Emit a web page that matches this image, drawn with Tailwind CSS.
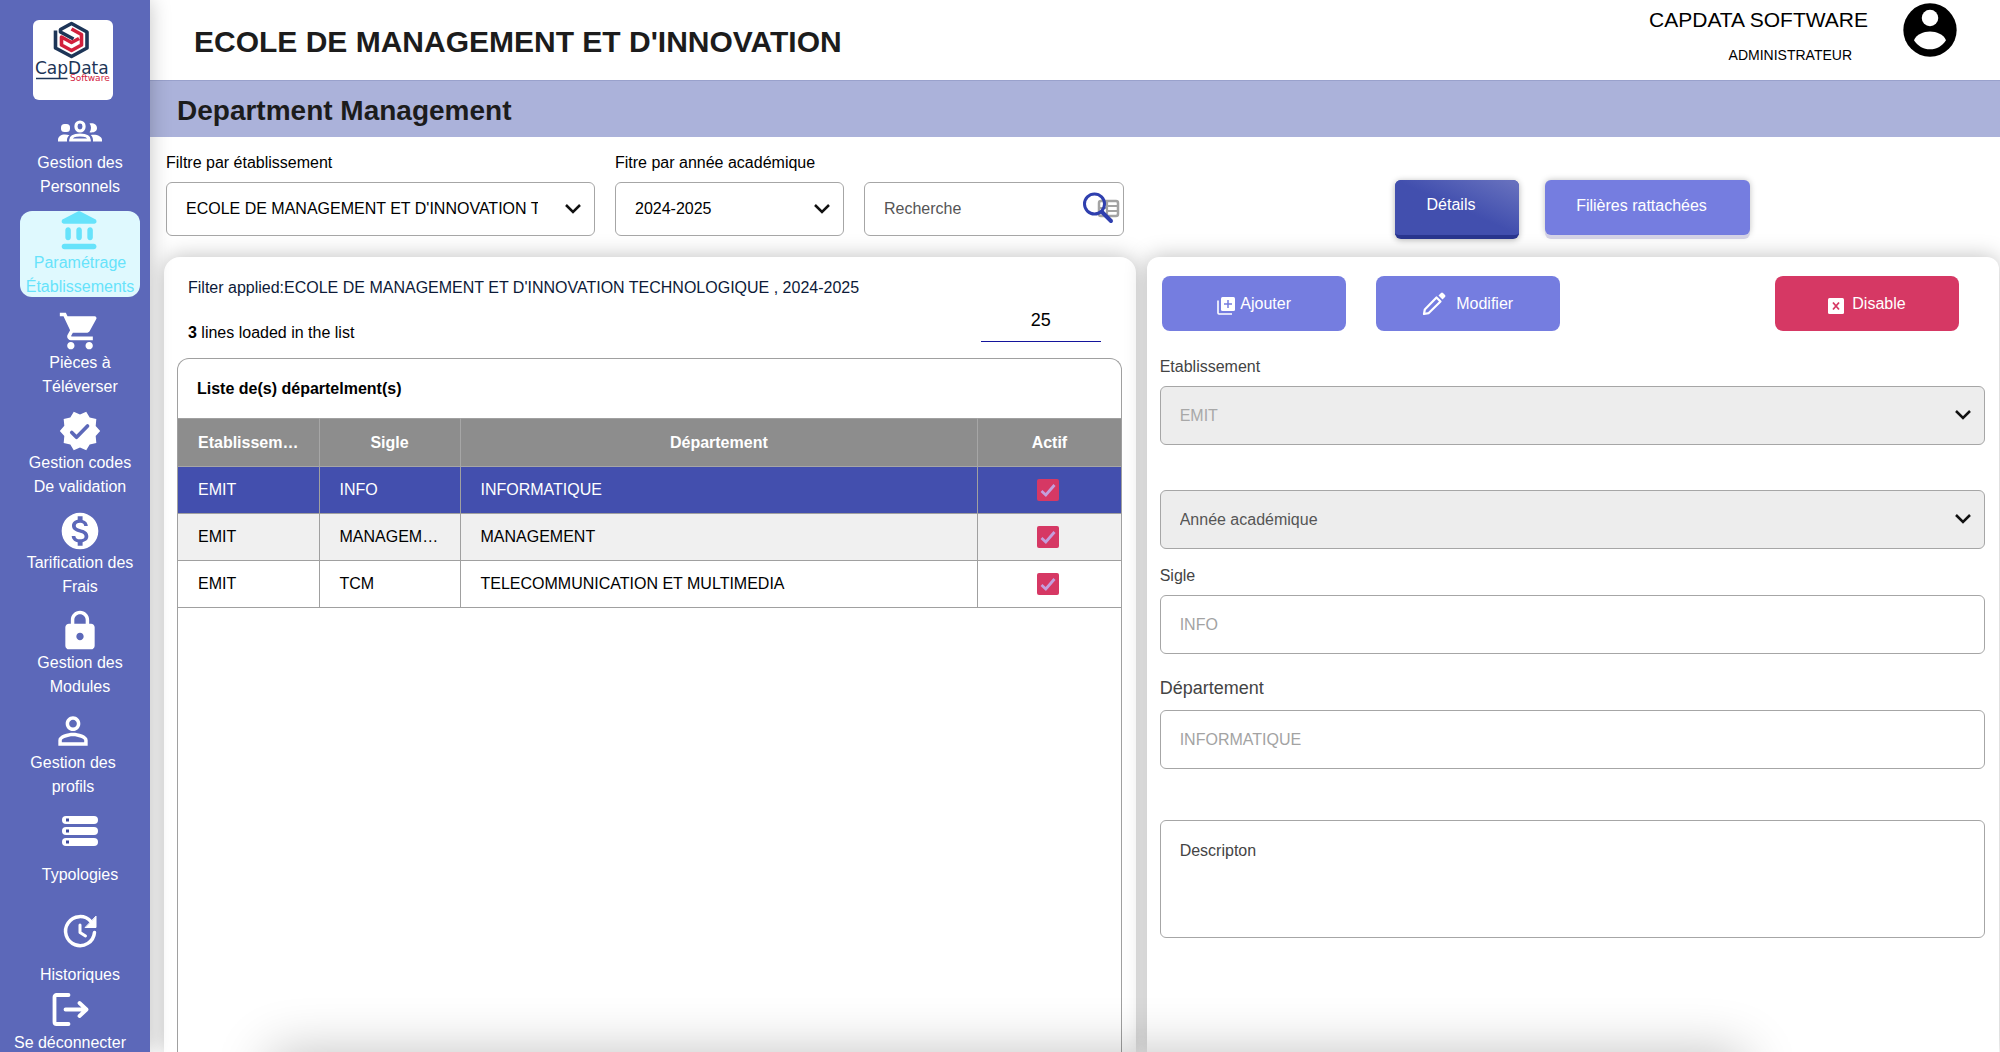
<!DOCTYPE html>
<html lang="fr">
<head>
<meta charset="utf-8">
<meta name="viewport" content="width=device-width, initial-scale=1">
<title>Department Management</title>
<script src="https://cdn.jsdelivr.net/npm/@tailwindcss/browser@4"></script>
</head>
<body class="flex h-screen overflow-hidden bg-white font-['Liberation_Sans',Arial,sans-serif] text-base leading-6 text-black">

<!-- Sidebar -->
<aside class="relative z-10 flex w-[150px] shrink-0 flex-col overflow-clip bg-[#5c68b9] pt-5 text-center text-white shadow-[0_0_20px_rgba(0,0,0,0.24)]">
  <a href="#" aria-label="CapData Software" class="ml-[33px] block size-20 shrink-0 rounded-md bg-white">
    <svg viewBox="0 0 80 80" class="size-20">
      <g fill="none" stroke-width="3.600" stroke-linejoin="round" stroke-linecap="butt">
        <path d="M22.500 10.500V28L38.500 36.500L54 28V12L38.500 3.500L27.500 9.500V12L40.500 19" stroke="#1d3557"/>
        <path d="M38.500 9L48.500 14.500V25L38.500 30.500L28.500 25V17L38.500 22.500L46 18.500" stroke="#d2203c"/>
      </g>
      <text x="2" y="54" font-family="DejaVu Sans, sans-serif" font-size="17" fill="#1d3557">CapData</text>
      <path d="M3 58.500H34.500" stroke="#1d3557" stroke-width="1.500"/>
      <text x="37" y="61" font-family="DejaVu Sans, sans-serif" font-size="9" fill="#d2203c">Software</text>
    </svg>
  </a>
  <nav class="mt-[11px] flex flex-col">
    <div class="flex flex-col gap-3.5 pl-5">
      <a href="#" class="block h-[86px] w-[120px]">
        <span class="flex h-10 items-center justify-center">
          <svg viewBox="0 0 44 44" class="size-11 shrink-0" fill="#fff">
            <rect x="3" y="15" width="9" height="8" rx="3.500"/><path d="M0 32.500V31c0-3.500 3-5.500 7-5.500 1.500 0 3 .2 4.500.8-1.800 1.400-2.500 3-2.500 4.700v1.500z"/>
            <path d="M31.500 14.500c4-.8 7.500 1 7.500 4.500s-3.500 5-7.500 4.200c2-2.500 2-6.200 0-8.700z"/><path d="M35 32.500V31c0-2-.8-3.700-2.300-5.100C38.500 25 44 27 44 31v1.500z"/>
            <rect x="18" y="13" width="8" height="9" rx="4" fill="none" stroke="#fff" stroke-width="3.200"/>
            <path d="M12.800 31c0-3.500 4.200-5 9.200-5s9.200 1.500 9.200 5z" fill="none" stroke="#fff" stroke-width="3.200"/>
          </svg>
        </span>Gestion des<br>Personnels</a>
      <a href="#" aria-current="page" class="block h-[86px] w-[120px] rounded-xl bg-[#dff9fe] text-[#67e3fb]">
        <span class="flex h-10 items-center justify-center">
          <svg viewBox="0 0 24 24" class="size-11 shrink-0" fill="currentColor"><path d="M4 11.500v4c0 .83.67 1.500 1.500 1.500S7 16.330 7 15.500v-4c0-.83-.67-1.500-1.500-1.500S4 10.670 4 11.500zm6 0v4c0 .83.67 1.500 1.500 1.500s1.500-.67 1.500-1.500v-4c0-.83-.67-1.500-1.500-1.500s-1.500.67-1.500 1.500zM3.500 22h16c.83 0 1.500-.67 1.500-1.500s-.67-1.500-1.500-1.500h-16c-.83 0-1.500.67-1.500 1.500S2.670 22 3.500 22zM16 11.500v4c0 .83.67 1.500 1.500 1.500s1.500-.67 1.500-1.500v-4c0-.83-.67-1.500-1.500-1.500s-1.500.67-1.500 1.500zM10.570 1.490l-7.900 4.160c-.41.21-.67.64-.67 1.100C2 7.440 2.560 8 3.250 8h16.510C20.440 8 21 7.440 21 6.750c0-.46-.26-.89-.67-1.100l-7.900-4.160c-.58-.31-1.280-.31-1.860 0z"/></svg>
        </span>Paramétrage<br>Établissements</a>
      <a href="#" class="block h-[86px] w-[120px]">
        <span class="flex h-10 items-center justify-center">
          <svg viewBox="0 0 24 24" class="size-11 shrink-0" fill="currentColor"><path d="M7 18c-1.100 0-1.990.9-1.990 2S5.900 22 7 22s2-.9 2-2-.9-2-2-2zM1 2v2h2l3.600 7.590-1.350 2.450c-.16.28-.25.61-.25.96 0 1.100.9 2 2 2h12v-2H7.420c-.14 0-.25-.11-.25-.25l.03-.12.900-1.630h7.450c.75 0 1.410-.41 1.750-1.030l3.580-6.490A1.003 1.003 0 0 0 20 4H5.210l-.94-2H1zm16 16c-1.100 0-1.990.9-1.990 2s.89 2 1.990 2 2-.9 2-2-.9-2-2-2z"/></svg>
        </span>Pièces à<br>Téléverser</a>
      <a href="#" class="block h-[86px] w-[120px]">
        <span class="flex h-10 items-center justify-center">
          <svg viewBox="0 0 24 24" class="size-11 shrink-0"><path fill="#fff" d="M23 12l-2.440-2.790.34-3.690-3.610-.82L15.400 1.500 12 2.960 8.600 1.500 6.710 4.690 3.100 5.500l.34 3.700L1 12l2.440 2.790-.34 3.700 3.610.82L8.600 22.500l3.400-1.470 3.400 1.460 1.890-3.190 3.610-.82-.34-3.690z"/><path d="M7.500 12.800l2.600 2.600 6-6.100" fill="none" stroke="#5c68b9" stroke-width="2" stroke-linecap="round" stroke-linejoin="round"/></svg>
        </span>Gestion codes<br>De validation</a>
      <a href="#" class="block h-[86px] w-[120px]">
        <span class="flex h-10 items-center justify-center">
          <svg viewBox="0 0 24 24" class="size-11 shrink-0" fill="currentColor"><path d="M12 2C6.480 2 2 6.480 2 12s4.480 10 10 10 10-4.480 10-10S17.520 2 12 2zm1.410 16.090V20h-2.670v-1.930c-1.710-.36-3.160-1.460-3.270-3.400h1.960c.1 1.050.82 1.870 2.650 1.870 1.960 0 2.400-.98 2.400-1.590 0-.83-.44-1.610-2.670-2.140-2.480-.6-4.180-1.620-4.180-3.670 0-1.720 1.390-2.840 3.110-3.210V4h2.670v1.950c1.860.45 2.790 1.860 2.850 3.390H14.300c-.05-1.110-.64-1.870-2.220-1.870-1.500 0-2.400.68-2.400 1.640 0 .84.65 1.390 2.670 1.910s4.180 1.390 4.180 3.910c-.01 1.830-1.380 2.830-3.120 3.160z"/></svg>
        </span>Tarification des<br>Frais</a>
      <a href="#" class="block h-[86px] w-[120px]">
        <span class="flex h-10 items-center justify-center">
          <svg viewBox="0 0 24 24" class="size-11 shrink-0" fill="currentColor"><path d="M18 8h-1V6c0-2.760-2.240-5-5-5S7 3.240 7 6v2H6c-1.100 0-2 .9-2 2v10c0 1.100.9 2 2 2h12c1.100 0 2-.9 2-2V10c0-1.100-.9-2-2-2zm-6 9c-1.100 0-2-.9-2-2s.9-2 2-2 2 .9 2 2-.9 2-2 2zm3.100-9H8.900V6c0-1.710 1.390-3.100 3.100-3.100 1.710 0 3.100 1.390 3.100 3.100v2z"/></svg>
        </span>Gestion des<br>Modules</a>
      <a href="#" class="block h-[86px] w-[106px]">
        <span class="flex h-10 items-center justify-center">
          <svg viewBox="0 0 24 24" class="size-11 shrink-0" fill="currentColor"><path d="M12 5.900c1.160 0 2.100.94 2.100 2.100s-.94 2.100-2.100 2.100S9.900 9.160 9.900 8s.94-2.100 2.100-2.100m0 9c2.970 0 6.100 1.460 6.100 2.100v1.100H5.900V17c0-.64 3.130-2.100 6.100-2.100M12 4C9.790 4 8 5.790 8 8s1.790 4 4 4 4-1.790 4-4-1.790-4-4-4zm0 9c-2.670 0-8 1.340-8 4v3h16v-3c0-2.660-5.330-4-8-4z"/></svg>
        </span>Gestion des<br>profils</a>
      <a href="#" class="flex h-[86px] w-[120px] flex-col justify-between">
        <span class="flex h-10 items-center justify-center">
          <svg viewBox="0 0 44 44" class="size-11 shrink-0"><g fill="#fff"><rect x="4" y="7" width="36" height="8" rx="4"/><rect x="4" y="18" width="36" height="8" rx="4"/><rect x="4" y="29" width="36" height="8" rx="4"/></g><path d="M8 9.500h3v3H8zM8 20.500h3v3H8zM8 31.500h3v3H8z" fill="#3e4b9e"/></svg>
        </span><span class="pb-2.5">Typologies</span></a>
      <a href="#" class="flex h-[86px] w-[120px] flex-col justify-between">
        <span class="flex h-10 items-center justify-center">
          <svg viewBox="0 0 44 44" class="size-11 shrink-0" fill="none" stroke="#fff" stroke-width="3.500" stroke-linecap="round" stroke-linejoin="round"><path d="M36.500 23.500A14.500 14.500 0 1 1 33 12.600"/><path d="M22 16v7.500l5.500 3.500" stroke-width="3"/><path d="M38 7.500v11H27.500z" fill="#fff" stroke-width="1"/></svg>
        </span><span class="pb-2.5">Historiques</span></a>
    </div>
    <a href="#" class="-mt-1.5 block w-[140px]">
      <span class="flex h-10 items-center justify-center">
        <svg viewBox="0 0 40 40" class="size-10 shrink-0" fill="none" stroke="#fff" stroke-width="3.800" stroke-linecap="round" stroke-linejoin="round"><path d="M18.500 4H6.500a2 2 0 0 0-2 2v25a2 2 0 0 0 2 2h12M15.500 18.500H36M29.500 12l7 6.500-7 6.500"/></svg>
      </span>Se déconnecter</a>
  </nav>
</aside>

<div class="flex min-w-0 flex-1 flex-col">
  <!-- Top bar -->
  <header class="flex h-20 shrink-0 items-start justify-between pr-[38px] pl-11">
    <h1 class="pt-[22px] text-[30px] leading-10 font-bold text-[#1c1c1c]">ECOLE DE MANAGEMENT ET D'INNOVATION</h1>
    <div class="flex items-start">
      <div class="flex flex-col items-end gap-3 pt-1.5 pr-[30px]">
        <span class="text-[21px] leading-7">CAPDATA SOFTWARE</span>
        <span class="pr-4 text-sm leading-[18px]">ADMINISTRATEUR</span>
      </div>
      <button type="button" aria-label="Compte" class="-mt-0.5">
        <svg viewBox="0 0 24 24" class="size-16"><circle cx="12" cy="12" r="10"/><circle cx="12" cy="7.500" r="3.100" fill="#fff"/><path d="M6 15.800c1-2.100 3.500-3.200 6-3.200s5 1.100 6 3.200c-1.300 2.100-3.500 3.400-6 3.400s-4.700-1.300-6-3.400z" fill="#fff"/></svg>
      </button>
    </div>
  </header>

  <div class="flex h-[57px] shrink-0 items-center border-t border-[#99a1cc] bg-[#abb2da] pt-1 pl-[27px]">
    <h2 class="text-[28px] leading-9 font-bold text-[#1c1c1c]">Department Management</h2>
  </div>

  <!-- Filters -->
  <section class="flex shrink-0 items-end pt-3.5 pl-4">
    <div class="w-[429px]">
      <label for="etab" class="block pb-[7px]">Filtre par établissement</label>
      <div class="relative mb-[21px]">
        <select id="etab" class="h-[54px] w-full appearance-none rounded-md border border-[#a6a6a6] bg-white pr-14 pl-[19px]"><option>ECOLE DE MANAGEMENT ET D'INNOVATION TECHNOLOGIQUE</option></select>
        <svg viewBox="0 0 16 10" class="pointer-events-none absolute top-[22px] right-3.5 h-2.5 w-4" fill="none" stroke="#111" stroke-width="2.500"><path d="M1 1l7 7 7-7"/></svg>
      </div>
    </div>
    <div class="ml-5 w-[229px]">
      <label for="annee" class="block pb-[7px]">Fitre par année académique</label>
      <div class="relative mb-[21px]">
        <select id="annee" class="h-[54px] w-full appearance-none rounded-md border border-[#a6a6a6] bg-white pr-14 pl-[19px]"><option>2024-2025</option></select>
        <svg viewBox="0 0 16 10" class="pointer-events-none absolute top-[22px] right-3.5 h-2.5 w-4" fill="none" stroke="#111" stroke-width="2.500"><path d="M1 1l7 7 7-7"/></svg>
      </div>
    </div>
    <div class="relative mb-[21px] ml-5 w-[260px]">
      <input type="text" aria-label="Recherche" placeholder="Recherche" class="h-[54px] w-full rounded-md border border-[#a6a6a6] bg-white pr-12 pl-[19px] placeholder:text-[#555]">
      <svg viewBox="0 0 40 36" class="pointer-events-none absolute top-2 right-0.5 h-9 w-10" fill="none">
        <rect x="17" y="11" width="19" height="15" rx="2" stroke="#a3a3a3" stroke-width="2.500"/><path d="M25 11v15M25 16h11M25 21h11M17 18h8" stroke="#a3a3a3" stroke-width="2.200"/>
        <circle cx="12.500" cy="14" r="10" stroke="#2f3fae" stroke-width="3"/><path d="M20 22l9 9" stroke="#2f3fae" stroke-width="4" stroke-linecap="round"/>
      </svg>
    </div>
    <div class="mb-[18px] ml-[271px] flex items-start gap-[26px]">
      <button type="button" class="h-[59px] w-[124px] rounded-md border-b-4 border-[#2a368f] bg-[#424fae] bg-linear-to-tr from-[#424fae] from-50% to-[#6a73bf] pr-3 pb-1.5 text-white shadow-[0_1px_6px_rgba(0,0,0,0.3)]">Détails</button>
      <button type="button" class="h-[55px] w-[205px] rounded-md bg-[#757de0] pr-3 pb-1 text-white shadow-[0_4px_0_#d5d3e6,0_0_6px_rgba(0,0,0,0.25)]">Filières rattachées</button>
    </div>
  </section>

  <!-- Panels -->
  <main class="grid min-h-0 flex-1 grid-cols-[57fr_50fr] gap-[11px] pr-px pl-3.5">
    <section class="flex flex-col rounded-t-2xl bg-white pt-[19px] pr-3.5 pl-[13px] shadow-[0_0_22px_rgba(0,0,0,0.26)]">
      <p class="pl-[11px] text-[#0c1a38]">Filter applied:ECOLE DE MANAGEMENT ET D'INNOVATION TECHNOLOGIQUE , 2024-2025</p>
      <div class="flex h-[58px] items-start justify-between pr-[21px] pl-[11px]">
        <p class="pt-[21px]"><b>3</b> lines loaded in the list</p>
        <input type="text" aria-label="Nombre de lignes" value="25" class="h-[42px] w-[120px] border-b border-[#14149c] text-center text-lg">
      </div>
      <div class="flex flex-1 flex-col overflow-hidden rounded-t-xl border border-b-0 border-[#a0a0a0]">
        <h3 class="h-[59px] pt-[18px] pl-[19px] font-bold">Liste de(s) départelment(s)</h3>
        <table class="w-full table-fixed border-collapse border-t border-[#a0a0a0]">
          <colgroup><col class="w-[141px]"><col class="w-[141px]"><col><col class="w-[143px]"></colgroup>
          <thead>
            <tr class="h-12 bg-[#8d8d8d] text-white">
              <th class="truncate border-r border-b border-[#a6a6a6] px-5">Etablissement</th>
              <th class="border-r border-b border-[#a6a6a6] px-5">Sigle</th>
              <th class="border-r border-b border-[#a6a6a6] px-5">Département</th>
              <th class="border-b border-[#a6a6a6] px-5">Actif</th>
            </tr>
          </thead>
          <tbody>
            <tr class="h-[47px] bg-[#434fae] text-white">
              <td class="border-r border-b border-[#a0a0a0] px-5">EMIT</td><td class="truncate border-r border-b border-[#a0a0a0] px-5">INFO</td><td class="border-r border-b border-[#a0a0a0] px-5">INFORMATIQUE</td>
              <td class="border-b border-[#a0a0a0]"><span class="flex justify-center pr-0.5"><span class="grid size-[22px] place-items-center"><input type="checkbox" checked aria-label="Actif" class="col-start-1 row-start-1 size-[22px] appearance-none rounded-xs bg-[#d63864]"><svg viewBox="0 0 16 16" class="pointer-events-none col-start-1 row-start-1 size-4" fill="none" stroke="#c49fdc" stroke-width="2.800"><path d="M1.500 9l4.300 4L14.500 3"/></svg></span></span></td>
            </tr>
            <tr class="h-[47px] bg-[#f0f0f0]">
              <td class="border-r border-b border-[#a0a0a0] px-5">EMIT</td><td class="truncate border-r border-b border-[#a0a0a0] px-5">MANAGEMENT</td><td class="border-r border-b border-[#a0a0a0] px-5">MANAGEMENT</td>
              <td class="border-b border-[#a0a0a0]"><span class="flex justify-center pr-0.5"><span class="grid size-[22px] place-items-center"><input type="checkbox" checked aria-label="Actif" class="col-start-1 row-start-1 size-[22px] appearance-none rounded-xs bg-[#d63864]"><svg viewBox="0 0 16 16" class="pointer-events-none col-start-1 row-start-1 size-4" fill="none" stroke="#c49fdc" stroke-width="2.800"><path d="M1.500 9l4.300 4L14.500 3"/></svg></span></span></td>
            </tr>
            <tr class="h-[47px]">
              <td class="border-r border-b border-[#a0a0a0] px-5">EMIT</td><td class="truncate border-r border-b border-[#a0a0a0] px-5">TCM</td><td class="border-r border-b border-[#a0a0a0] px-5">TELECOMMUNICATION ET MULTIMEDIA</td>
              <td class="border-b border-[#a0a0a0]"><span class="flex justify-center pr-0.5"><span class="grid size-[22px] place-items-center"><input type="checkbox" checked aria-label="Actif" class="col-start-1 row-start-1 size-[22px] appearance-none rounded-xs bg-[#d63864]"><svg viewBox="0 0 16 16" class="pointer-events-none col-start-1 row-start-1 size-4" fill="none" stroke="#c49fdc" stroke-width="2.800"><path d="M1.500 9l4.300 4L14.500 3"/></svg></span></span></td>
            </tr>
          </tbody>
        </table>
      </div>
    </section>

    <section class="rounded-t-xl bg-white pt-[19px] pr-3.5 pl-[13px] text-[#444] shadow-[0_0_22px_rgba(0,0,0,0.26)]">
      <div class="flex gap-[30px] pr-[26px] pl-0.5 text-white">
        <button type="button" class="flex h-[55px] w-[184px] items-center justify-center gap-1 rounded-lg bg-[#757de0]">
          <svg viewBox="0 0 20 20" class="mt-1 size-5"><rect x="5" y="1" width="14" height="14" rx="1.500" fill="#fff"/><path d="M2 4.500V17a1 1 0 0 0 1 1h13" fill="none" stroke="#fff" stroke-width="1.600"/><path d="M12 4v8M8 8h8" stroke="#757de0" stroke-width="1.500"/></svg>
          Ajouter</button>
        <button type="button" class="flex h-[55px] w-[184px] items-center justify-center gap-2.5 rounded-lg bg-[#757de0]">
          <svg viewBox="0 0 24 24" class="size-6"><path d="M2 22l.8-4.500L14.500 5.500l4 4L6.500 21.200z" fill="none" stroke="#fff" stroke-width="2.200" stroke-linejoin="round"/><path d="M16.500 3.500l2.500-2.500q1-1 2 0l2 2q1 1 0 2l-2.500 2.500z" fill="#fff"/></svg>
          Modifier</button>
        <button type="button" class="ml-auto flex h-[55px] w-[184px] items-center justify-center gap-2 rounded-lg bg-[#d63864]">
          <svg viewBox="0 0 16 16" class="mt-1 size-4"><rect width="16" height="16" rx="1.500" fill="#fff"/><path d="M5 4.500l6 7M11 4.500l-6 7" stroke="#d63864" stroke-width="1.800"/></svg>
          Disable</button>
      </div>
      <label for="f-etab" class="block pt-6 pb-[7px]">Etablissement</label>
      <div class="relative">
        <select id="f-etab" disabled class="block h-[59px] w-full appearance-none rounded-md border border-[#a6a6a6] bg-[#ededed] px-[19px] text-[#a8a8a8] opacity-100"><option>EMIT</option></select>
        <svg viewBox="0 0 16 10" class="pointer-events-none absolute top-6 right-3.5 h-2.5 w-4" fill="none" stroke="#111" stroke-width="2.500"><path d="M1 1l7 7 7-7"/></svg>
      </div>
      <div class="relative mt-[45px]">
        <select aria-label="Année académique" disabled class="block h-[59px] w-full appearance-none rounded-md border border-[#a6a6a6] bg-[#ededed] px-[19px] text-[#555] opacity-100"><option>Année académique</option></select>
        <svg viewBox="0 0 16 10" class="pointer-events-none absolute top-6 right-3.5 h-2.5 w-4" fill="none" stroke="#111" stroke-width="2.500"><path d="M1 1l7 7 7-7"/></svg>
      </div>
      <label for="sigle" class="block pt-[15px] pb-[7px]">Sigle</label>
      <input id="sigle" type="text" disabled value="INFO" class="block h-[59px] w-full rounded-md border border-[#a6a6a6] bg-white px-[19px] text-[#a3a3a3]">
      <label for="dep" class="block pt-[22px] pb-2.5 text-lg leading-6">Département</label>
      <input id="dep" type="text" disabled value="INFORMATIQUE" class="block h-[59px] w-full rounded-md border border-[#a6a6a6] bg-white px-[19px] text-[#a3a3a3]">
      <textarea aria-label="Description" placeholder="Descripton" class="mt-[51px] block h-[118px] w-full resize-none rounded-md border border-[#a6a6a6] bg-white px-[19px] pt-[18px] placeholder:text-[#444]"></textarea>
    </section>
  </main>
</div>

<!-- Soft shadow rising from the bottom edge -->
<div aria-hidden="true" class="pointer-events-none fixed top-full right-64 left-[270px] h-24 shadow-[0_0_54px_rgba(0,0,0,0.24)]"></div>
</body>
</html>
